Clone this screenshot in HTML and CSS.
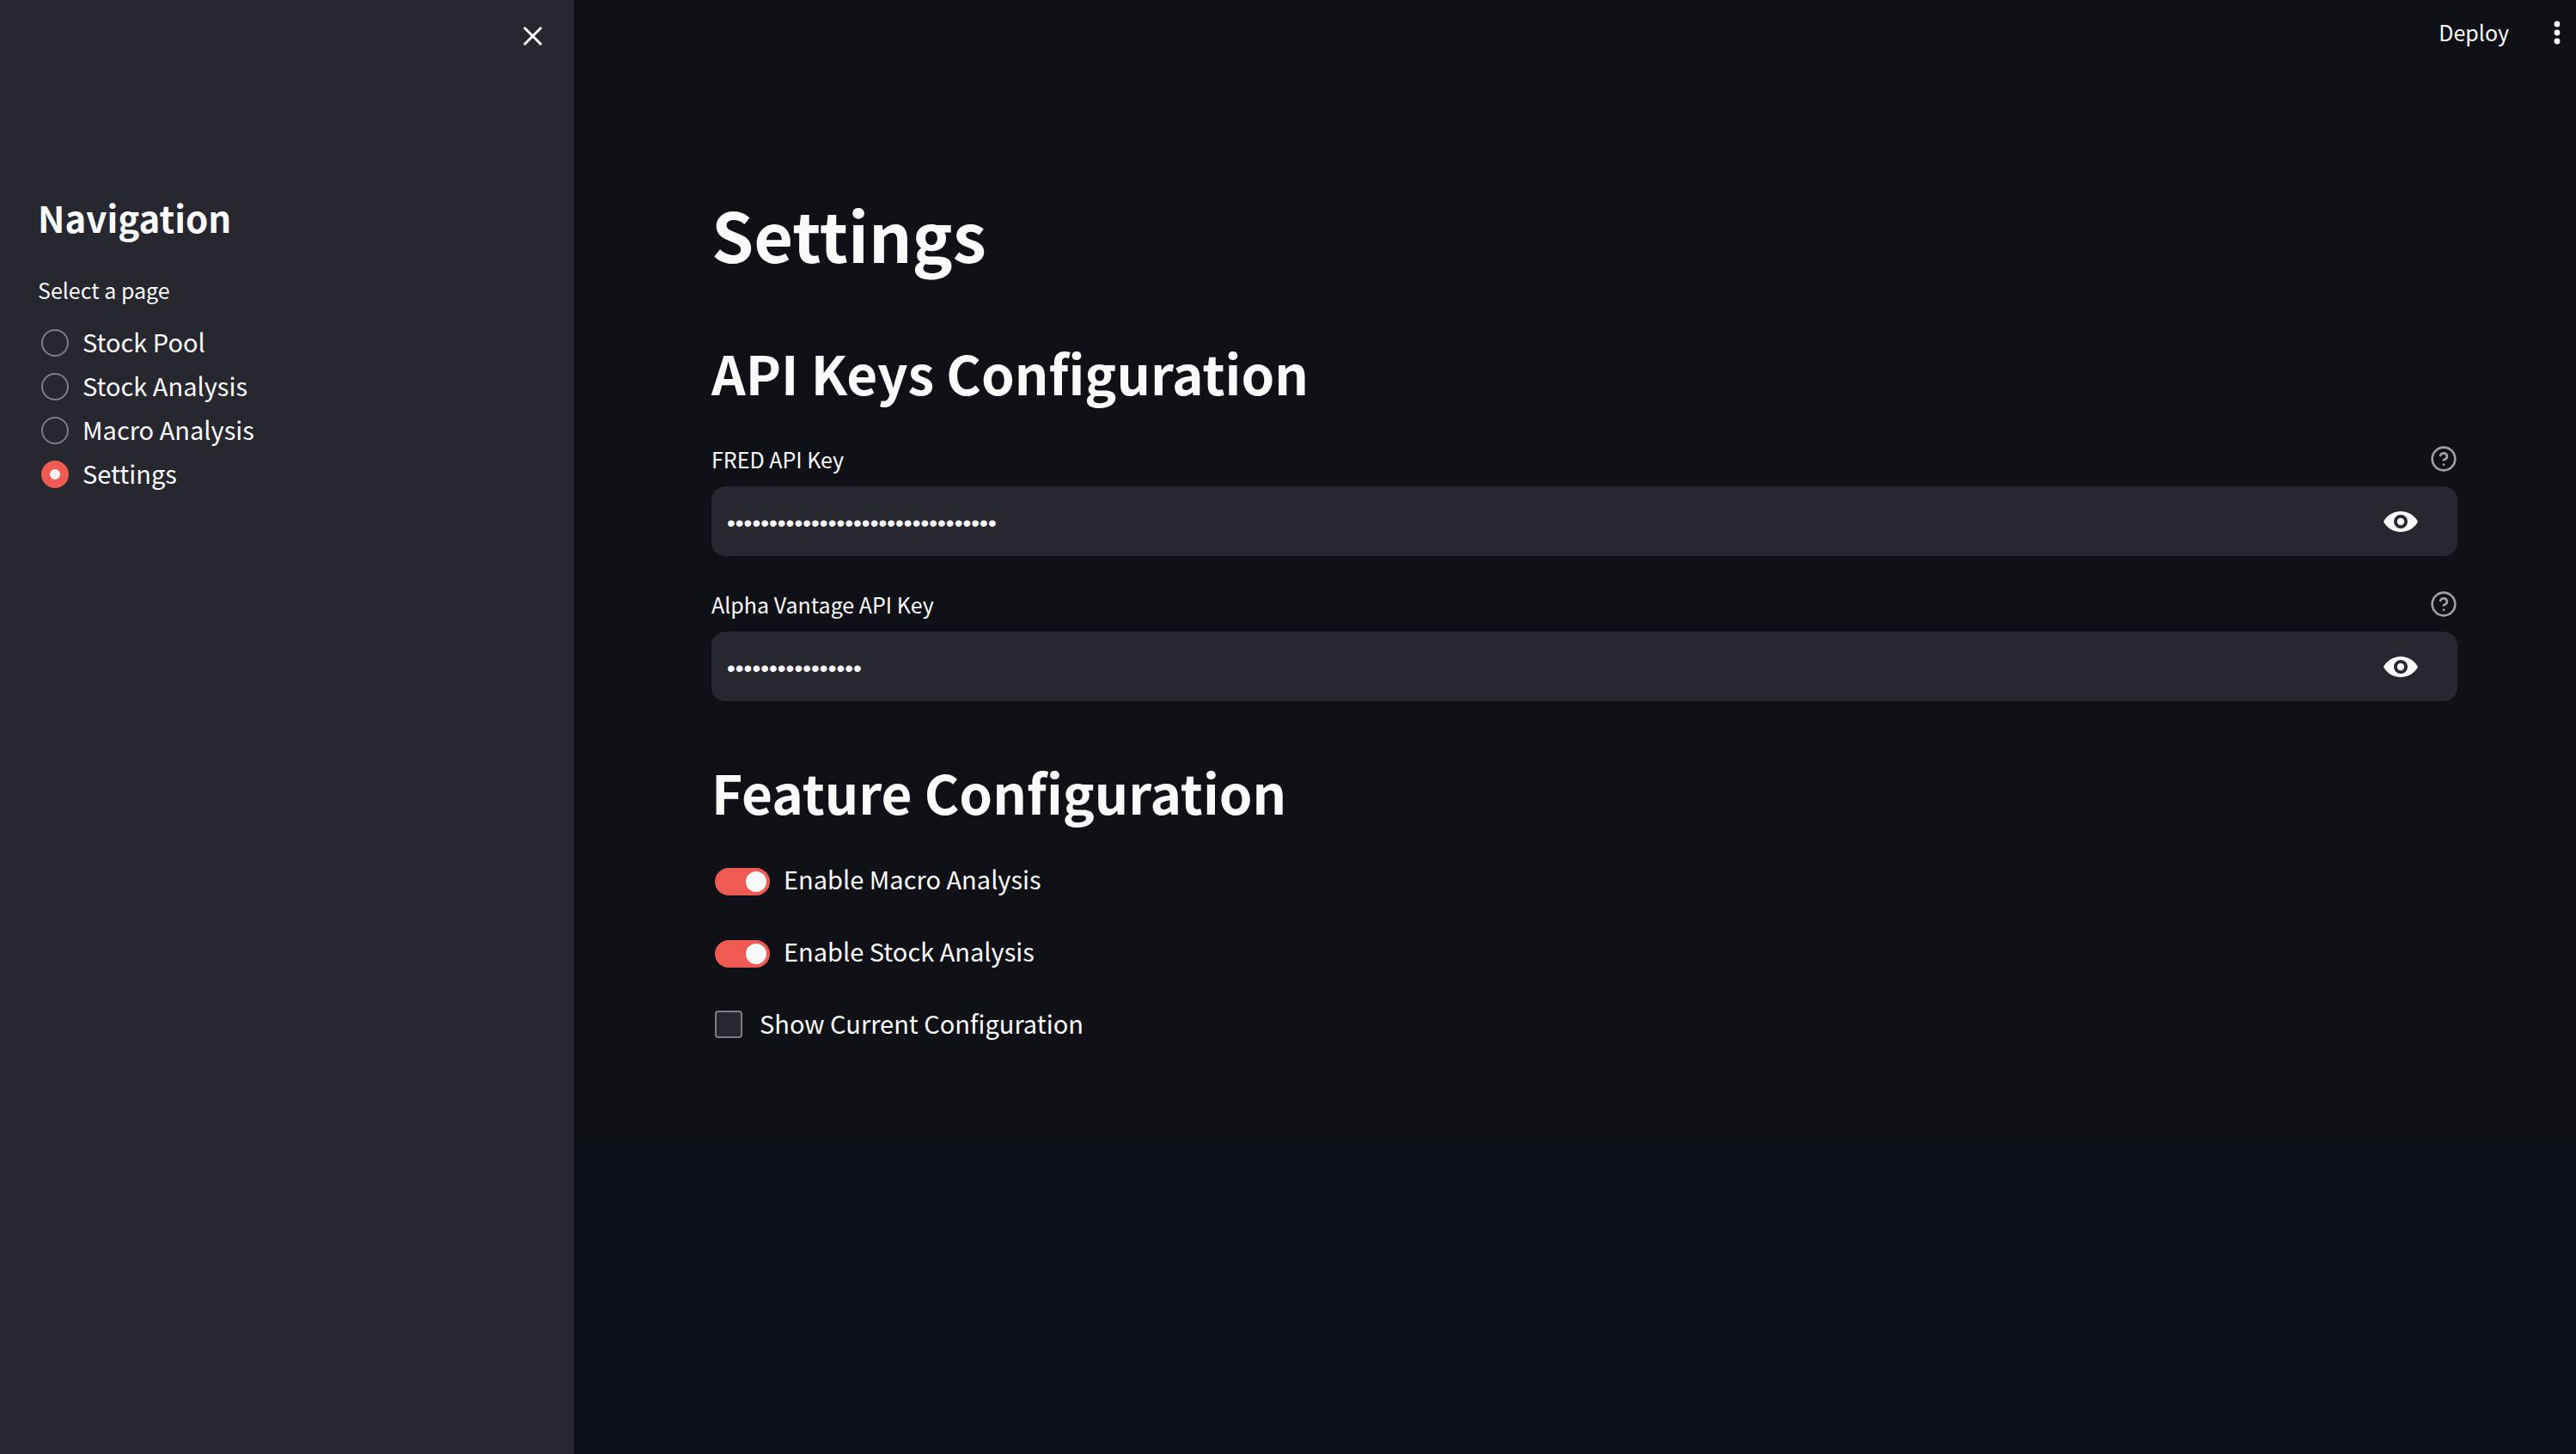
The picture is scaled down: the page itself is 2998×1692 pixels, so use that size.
FILE: index.html
```html
<!DOCTYPE html>
<html lang="en">
<head>
<meta charset="utf-8">
<meta name="viewport" content="width=device-width, initial-scale=1">
<title>Settings</title>
<link rel="stylesheet" href="styles.css">
</head>
<body>
<div class="app">
  <aside class="sidebar">
    <div class="sidebar-top">
      <button class="icon-button" type="button" aria-label="Close sidebar">
        <svg class="icon-close" viewBox="0 0 24 24" aria-hidden="true"><path d="M2 2 22 22M22 2 2 22"/></svg>
      </button>
    </div>
    <h2 class="nav-title">Navigation</h2>
    <fieldset class="nav">
      <legend class="nav-label">Select a page</legend>
      <label class="nav-item"><input class="radio" type="radio" name="page"><span class="choice-text">Stock Pool</span></label>
      <label class="nav-item"><input class="radio" type="radio" name="page"><span class="choice-text">Stock Analysis</span></label>
      <label class="nav-item"><input class="radio" type="radio" name="page"><span class="choice-text">Macro Analysis</span></label>
      <label class="nav-item"><input class="radio" type="radio" name="page" checked><span class="choice-text">Settings</span></label>
    </fieldset>
  </aside>
  <div class="view">
    <header class="toolbar">
      <button class="deploy" type="button">Deploy</button>
      <button class="icon-button" type="button" aria-label="Main menu">
        <svg class="icon-menu" viewBox="0 0 8 28" aria-hidden="true"><circle cx="4" cy="4" r="3.4"/><circle cx="4" cy="14" r="3.4"/><circle cx="4" cy="24" r="3.4"/></svg>
      </button>
    </header>
    <main class="content">
      <h1 class="page-title">Settings</h1>
      <h2 class="section-title">API Keys Configuration</h2>
      <div class="field">
        <div class="field-head">
          <label for="fred">FRED API Key</label>
          <button class="icon-button" type="button" aria-label="Help for FRED API Key">
            <svg class="icon-help" viewBox="0 0 24 24" aria-hidden="true"><circle cx="12" cy="12" r="10"/><path d="M9.09 9a3 3 0 0 1 5.83 1c0 2-3 3-3 3M12 17h.01"/></svg>
          </button>
        </div>
        <div class="field-box">
          <input class="field-input" id="fred" type="password" value="abcdefghijklmnopqrstuvwxyz012345">
          <button class="icon-button" type="button" aria-label="Show password text">
            <svg class="icon-eye" viewBox="0 0 40 24" aria-hidden="true"><path fill-rule="evenodd" d="M20 0C11 0 3.500 5 0 12c3.500 7 11 12 20 12s16.500-5 20-12C36.500 5 29 0 20 0Zm0 20a8 8 0 1 1 0-16 8 8 0 0 1 0 16Z"/><circle cx="20" cy="12" r="4.200"/></svg>
          </button>
        </div>
      </div>
      <div class="field">
        <div class="field-head">
          <label for="alpha">Alpha Vantage API Key</label>
          <button class="icon-button" type="button" aria-label="Help for Alpha Vantage API Key">
            <svg class="icon-help" viewBox="0 0 24 24" aria-hidden="true"><circle cx="12" cy="12" r="10"/><path d="M9.09 9a3 3 0 0 1 5.83 1c0 2-3 3-3 3M12 17h.01"/></svg>
          </button>
        </div>
        <div class="field-box">
          <input class="field-input" id="alpha" type="password" value="abcdefghijklmnop">
          <button class="icon-button" type="button" aria-label="Show password text">
            <svg class="icon-eye" viewBox="0 0 40 24" aria-hidden="true"><path fill-rule="evenodd" d="M20 0C11 0 3.500 5 0 12c3.500 7 11 12 20 12s16.500-5 20-12C36.500 5 29 0 20 0Zm0 20a8 8 0 1 1 0-16 8 8 0 0 1 0 16Z"/><circle cx="20" cy="12" r="4.200"/></svg>
          </button>
        </div>
      </div>
      <h2 class="section-title">Feature Configuration</h2>
      <div class="options">
        <label class="option"><input class="toggle" type="checkbox" role="switch" checked><span class="choice-text">Enable Macro Analysis</span></label>
        <label class="option"><input class="toggle" type="checkbox" role="switch" checked><span class="choice-text">Enable Stock Analysis</span></label>
        <label class="option option-check"><input class="checkbox" type="checkbox"><span class="choice-text">Show Current Configuration</span></label>
      </div>
    </main>
  </div>
</div>
</body>
</html>
```
FILE: styles.css
```css
:root {
  --bg: #0d1117;
  --surface: #101116;
  --panel: #272730;
  --text: #fafafa;
  --accent: #ef5a53;
  --muted: #7d7d82;
}

* { box-sizing: border-box; }

body {
  margin: 0;
  background: var(--bg);
  color: var(--text);
  font: 400 29px/44px "Noto Sans CJK SC", "Noto Sans", sans-serif;
}

button, input { font: inherit; color: inherit; margin: 0; }

h1, h2 { margin: 0; }

.app { display: flex; min-height: 100vh; }

.sidebar {
  flex: 0 0 668px;
  padding: 0 36px 48px 44px;
  background: var(--panel);
}

.sidebar-top {
  display: flex;
  justify-content: flex-end;
  height: 223px;
  padding-top: 30px;
}

.icon-button {
  display: flex;
  flex: none;
  padding: 0;
  border: 0;
  background: none;
}

.sidebar-top .icon-button,
.toolbar .icon-button { align-self: flex-start; }

.icon-close { width: 24px; height: 24px; fill: none; stroke: var(--text); stroke-width: 3; }
.icon-menu { width: 8px; height: 28px; fill: var(--text); }
.icon-help { width: 32px; height: 32px; fill: none; stroke: #a0a0a2; stroke-width: 2; stroke-linecap: round; stroke-linejoin: round; }
.icon-eye { width: 40px; height: 24px; fill: var(--text); }

.nav-title { font-size: 42px; line-height: 60px; font-weight: 700; }

.nav { margin: 32px 0 0; padding: 0; border: 0; }

.nav-label { padding: 0 0 14px; font-size: 25px; }

.nav-item { display: flex; align-items: center; gap: 16px; height: 51px; padding-left: 4px; }

.choice-text { padding-bottom: 4px; }

.radio {
  appearance: none;
  width: 32px;
  height: 32px;
  border: 2px solid var(--muted);
  border-radius: 50%;
}

.radio:checked { border: 10px solid var(--accent); background: #f0f2f6; }

.view { flex: 1; min-width: 0; }

.toolbar {
  display: flex;
  align-items: flex-start;
  justify-content: flex-end;
  gap: 52px;
  height: 90px;
  padding: 16px 18px 0 0;
  background: var(--surface);
}

.toolbar .icon-button { padding-top: 8px; }

.deploy { padding: 0; border: 0; background: none; font-size: 25px; line-height: 42px; }

.content { padding: 128px 138px 114px 160px; background: var(--surface); }

.page-title { margin-bottom: 34px; font-size: 79px; line-height: 108px; font-weight: 700; }

.section-title { padding: 33px 0 37px; font-size: 62px; line-height: 80px; font-weight: 700; }

.field { margin-bottom: 32px; }

.field-head {
  display: flex;
  align-items: center;
  justify-content: space-between;
  height: 56px;
  padding-bottom: 8px;
  font-size: 25px;
}

.field-box {
  display: flex;
  align-items: center;
  height: 81px;
  padding-right: 46px;
  border-radius: 16px;
  background: var(--panel);
}

.field-input {
  flex: 1;
  min-width: 0;
  height: 80px;
  padding: 4px 18px 0;
  border: 0;
  outline: 0;
  background: none;
  font: 28px "Liberation Sans", sans-serif;
}

.options { display: flex; flex-direction: column; gap: 36px; padding-top: 2px; }

.option { display: flex; align-items: center; gap: 16px; padding-left: 4px; }

.option-check { gap: 20px; }

.toggle {
  appearance: none;
  display: flex;
  justify-content: flex-end;
  width: 64px;
  height: 32px;
  margin-top: 4px;
  padding: 4px;
  border-radius: 16px;
  background: var(--accent);
}

.toggle::before { content: ""; width: 24px; height: 24px; border-radius: 50%; background: var(--text); }

.toggle:not(:checked) { justify-content: flex-start; background: var(--muted); }

.checkbox {
  appearance: none;
  width: 32px;
  height: 32px;
  border: 2px solid var(--muted);
  border-radius: 4px;
  background: var(--panel);
}

.checkbox:checked { background: var(--accent); }
```
